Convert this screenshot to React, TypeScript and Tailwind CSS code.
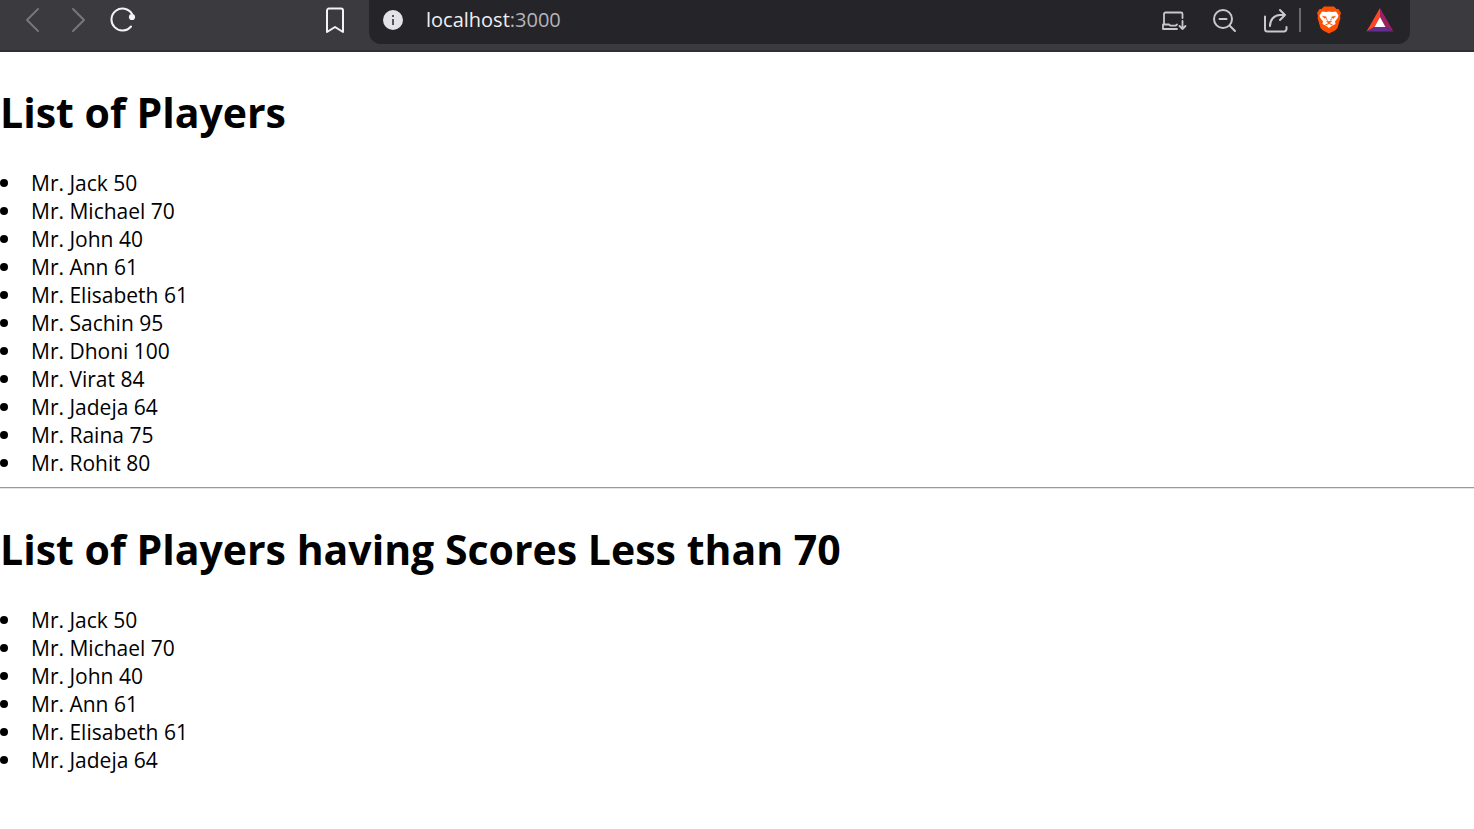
import React from "react";

type Player = { name: string; score: number };

const players: Player[] = [
  { name: "Jack", score: 50 },
  { name: "Michael", score: 70 },
  { name: "John", score: 40 },
  { name: "Ann", score: 61 },
  { name: "Elisabeth", score: 61 },
  { name: "Sachin", score: 95 },
  { name: "Dhoni", score: 100 },
  { name: "Virat", score: 84 },
  { name: "Jadeja", score: 64 },
  { name: "Raina", score: 75 },
  { name: "Rohit", score: 80 },
];

function PlayerList({ title, items }: { title: string; items: Player[] }) {
  return (
    <section>
      <h1 className="pt-8 pb-[29px] text-[41px] leading-[56px] font-bold">{title}</h1>
      <ul>
        {items.map((p) => (
          <li key={p.name} className="flex items-center gap-[23px] text-[21px] leading-7">
            <span className="size-2 rounded-full bg-black" />
            <span>
              Mr. {p.name} {p.score}
            </span>
          </li>
        ))}
      </ul>
    </section>
  );
}

const line = {
  fill: "none",
  stroke: "currentColor",
  strokeWidth: 2,
  strokeLinecap: "round",
  strokeLinejoin: "round",
} as const;

function BrowserBar() {
  return (
    <header className="flex h-[52px] items-start border-b-2 border-[#2f2e31] bg-[#3b3a3f] pr-16 pl-5">
      <nav className="mr-[187px] flex h-10 items-center text-[#f4f4f6]">
        <button aria-label="Back" className="w-[45px] text-[#77767b]">
          <svg width="26" height="26" viewBox="0 0 26 26" {...line}>
            <path d="M18 2 7 13l11 11" />
          </svg>
        </button>
        <button aria-label="Forward" className="w-[45px] text-[#77767b]">
          <svg width="26" height="26" viewBox="0 0 26 26" {...line}>
            <path d="m8 2 11 11L8 24" />
          </svg>
        </button>
        <button aria-label="Reload">
          <svg width="26" height="26" viewBox="0 0 26 26" {...line}>
            <path d="M21 19.5A11 11 0 1 1 22 7" />
            <circle cx="22" cy="10" r="3.1" fill="currentColor" stroke="none" />
          </svg>
        </button>
      </nav>
      <button aria-label="Bookmark" className="mr-[22px] flex h-10 items-center text-[#f4f4f6]">
        <svg width="24" height="26" viewBox="0 0 24 26" {...line}>
          <path d="M6 1.500h12a2 2 0 0 1 2 2V25l-8-5-8 5V3.500a2 2 0 0 1 2-2Z" />
        </svg>
      </button>
      <div className="flex h-11 flex-1 items-start rounded-b-xl bg-[#252429] pr-4 pl-3.5 text-[#c9c8cd]">
        <div className="flex h-10 flex-1 items-center gap-[23px]">
          <svg width="20" height="20" viewBox="0 0 20 20" aria-label="Site information">
            <circle cx="10" cy="10" r="10" fill="#e3e2e8" />
            <path d="M10 5v2M10 9v6" stroke="#56555b" strokeWidth="2" />
          </svg>
          <a href="#" className="text-xl leading-7 text-[#efeff2]">
            localhost<span className="text-[#b5b4bb]">:3000</span>
          </a>
        </div>
        <div className="flex h-10 items-center">
          <button aria-label="Install app" className="w-[51px]">
            <svg width="26" height="26" viewBox="0 0 26 26" {...line}>
              <path
                d="M3 17V7a1.500 1.500 0 0 1 1.500-1.500H20A1.500 1.500 0 0 1 21.500 7v4M2 17.500h6l1.500 1.200h5l1.500-1.200M2 17.500V22h14M21.500 14v8M18.500 19l3 3 3-3"
                strokeWidth="1.8"
              />
            </svg>
          </button>
          <button aria-label="Zoom out" className="w-[51px]">
            <svg width="26" height="26" viewBox="0 0 26 26" {...line}>
              <circle cx="11" cy="12" r="9" />
              <path d="m17.500 18.500 5.500 5.500M7.500 12h7" />
            </svg>
          </button>
          <button aria-label="Share" className="w-9">
            <svg width="26" height="26" viewBox="0 0 26 26" {...line}>
              <path d="M2 9.500V22a2.500 2.500 0 0 0 2.500 2.500H21a2.500 2.500 0 0 0 2.500-2.500v-2M7 19c0-6 4-11 10-11h5M17 3l5 5-5 5" />
            </svg>
          </button>
          <span className="mr-4 h-6 w-0.5 bg-[#6a696f]" />
          <button aria-label="Brave Shields" className="w-[49px]">
            <svg width="24" height="28" viewBox="0 0 24 28">
              <path
                d="M7 .5h10l2.500 2.500h2L24 7l-1 3 .5 2-3 10-2.500 2.500-6 3-6-3L3.500 22l-3-10L1 10 0 7l2.500-4h2Z"
                fill="#ff4f00"
              />
              <path
                d="m5 5.500 4 .5 3-.5 3 .5 4-.5 2.500 4-.5 2-3 4 .5 2.500-3 1.500-1.500 1L12 22l-2-1.500L8.500 19.500l-3-1.500.5-2.500-3-4-.5-2Z"
                fill="white"
              />
              <path
                d="m5.500 10.200 4 .8-1.500 1.500ZM18.500 10.200l-4 .8 1.500 1.500ZM9.500 15.500h5L12 17.200Z"
                fill="#ff4f00"
                stroke="#ff4f00"
                strokeWidth=".6"
              />
              <path d="m9.500 12.500.8 2M14.500 12.500l-.8 2M8.500 18.800l3.500-1.300 3.500 1.300" fill="none" stroke="#ff4f00" />
            </svg>
          </button>
          <button aria-label="Rewards">
            <svg width="28" height="26" viewBox="0 0 28 26">
              <path d="M14 1 .5 24.500 8.500 20 14 10Z" fill="#ff4724" />
              <path d="m14 1 13.500 23.500-8-4.500L14 10Z" fill="#9e1f63" />
              <path d="m.5 24.500 8-4.500h11l8 4.500Z" fill="#662d91" />
              <path d="m14 10 5.500 10h-11Z" fill="white" />
            </svg>
          </button>
        </div>
      </div>
    </header>
  );
}

export default function App() {
  return (
    <div className="min-h-screen bg-white font-['Segoe_UI','Open_Sans',sans-serif] text-black">
      <BrowserBar />
      <main>
        <PlayerList title="List of Players" items={players} />
        <hr className="mt-[10px] border-t border-b border-t-[#9a9a9a] border-b-[#e4e4e4]" />
        <PlayerList
          title="List of Players having Scores Less than 70"
          items={players.filter((p) => p.score <= 70)}
        />
      </main>
    </div>
  );
}
